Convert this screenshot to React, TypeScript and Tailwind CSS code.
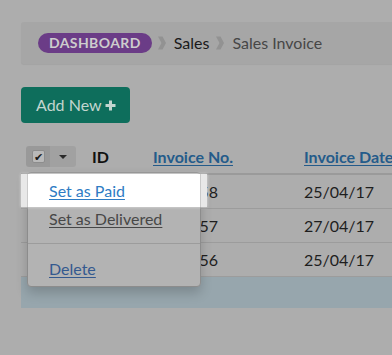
import React from "react";

const Chevron = () => (
  <svg width="8" height="16" viewBox="0 0 8 16" className="shrink-0">
    <polygon points="0,1.5 4.5,1.5 8,8 4.5,14.5 0,14.5 3.5,8" fill="#929292" />
  </svg>
);

const rows = [
  { no: "1000058", date: "25/04/17" },
  { no: "1000057", date: "27/04/17" },
  { no: "1000056", date: "25/04/17" },
];

const App = () => {
  return (
    <div className="relative w-[392px] h-[355px] overflow-hidden bg-[#adadad] font-[Lato,sans-serif] text-[16px] text-[#1e1e1e]">
      <div className="w-[520px] pl-[21px] pt-[22px]">
        {/* breadcrumb */}
        <div className="h-[42px] rounded-[3px] bg-[#a6a6a6] flex items-center pl-[17px] shadow-[0_1px_1px_rgba(0,0,0,0.06)]">
          <span className="h-[20px] px-[11px] rounded-full bg-[#6b3c87] text-[#cdcdcd] font-bold text-[14px] tracking-[0.4px] flex items-center leading-none">
            DASHBOARD
          </span>
          <span className="ml-[6px] mr-[8px]">
            <Chevron />
          </span>
          <span className="text-[#1a1a1a]">Sales</span>
          <span className="ml-[7px] mr-[8px]">
            <Chevron />
          </span>
          <span className="text-[#474747]">Sales Invoice</span>
        </div>

        {/* add new */}
        <button className="mt-[23px] h-[36px] w-[109px] rounded-[4px] bg-[#0e6e5c] text-[#c3d5cf] flex items-center pl-[15px] gap-[3px] text-[16px]">
          <span>Add New</span>
          <svg width="11" height="11" viewBox="0 0 11 11">
            <path d="M5.5 0.5v10M0.5 5.5h10" stroke="#c3d5cf" strokeWidth="3" />
          </svg>
        </button>

        {/* table */}
        <div className="mt-[17px]">
          <div className="h-[33px] flex items-center border-b-2 border-[#9a9a9a] box-content">
            <div className="w-[71px] pl-[5px] flex">
              <div className="flex h-[21px] rounded-[3px] overflow-hidden">
                <div className="w-[24px] bg-[#999999] flex items-center justify-center">
                  <span className="w-[13px] h-[13px] rounded-[2px] bg-[#b9b9b9] border border-[#8d8d8d] flex items-center justify-center text-[11px] leading-none text-[#1a1a1a]">
                    ✔
                  </span>
                </div>
                <div className="w-[26px] bg-[#a1a1a1] flex items-center justify-center">
                  <svg width="8" height="4" viewBox="0 0 8 4">
                    <polygon points="0,0 8,0 4,4" fill="#2a2a2a" />
                  </svg>
                </div>
              </div>
            </div>
            <div className="w-[61px] font-bold text-[#111]">ID</div>
            <div className="w-[151px] font-bold text-[#245b8a] underline underline-offset-2">Invoice No.</div>
            <div className="font-bold text-[#245b8a] underline underline-offset-2">Invoice Date</div>
          </div>
          {rows.map((r) => (
            <div key={r.no} className="h-[34px] flex items-center border-b border-[#9c9c9c] box-border">
              <div className="w-[132px]" />
              <div className="w-[151px] text-[#1e1e1e]">{r.no}</div>
              <div className="text-[#1e1e1e]">{r.date}</div>
            </div>
          ))}
          <div className="h-[31px] bg-[#97a6ad]" />
        </div>
      </div>

      {/* spotlight */}
      <div className="absolute left-[21px] top-[174px] w-[186px] h-[33px] bg-[#e8e8e8] z-10 shadow-[0_0_3px_rgba(255,255,255,0.6)]" />

      {/* dropdown menu */}
      <div className="absolute left-[27px] top-[172px] w-[174px] h-[115px] bg-[#b3b3b3] border border-[#8c8c8c] rounded-[4px] shadow-[0_6px_12px_rgba(0,0,0,0.18)] pt-px">
        <div className="relative z-20 -mx-px h-[33px] bg-white border-x border-[#cacaca] flex items-center pl-[21px]">
          <span className="text-[#2e7cc4] underline underline-offset-2">Set as Paid</span>
        </div>
        <div className="h-[23px] flex items-center pl-[21px]">
          <span className="text-[#474747] underline underline-offset-2">Set as Delivered</span>
        </div>
        <div className="h-[26px] flex items-center">
          <div className="w-full h-px bg-[#9c9c9c]" />
        </div>
        <div className="h-[25px] flex items-center pl-[21px]">
          <span className="text-[#34598f] underline underline-offset-2">Delete</span>
        </div>
      </div>
    </div>
  );
};

export default App;
